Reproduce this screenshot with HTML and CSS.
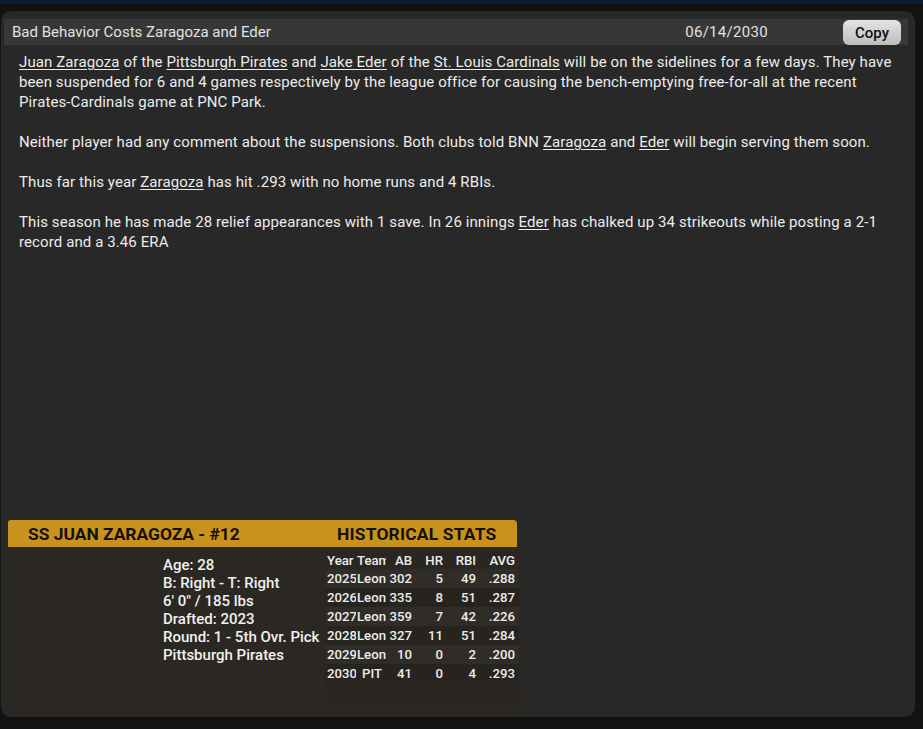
FILE: index.html
```html
<!DOCTYPE html>
<html>
<head>
<meta charset="utf-8">
<link rel="stylesheet" href="styles.css">
</head>
<body>
<div class="topbar"></div>
<div class="panel">
  <div class="header">
    <span class="title">Bad Behavior Costs Zaragoza and Eder</span>
    <span class="date">06/14/2030</span>
    <button class="copy">Copy</button>
  </div>
  <div class="article">
    <p><a>Juan Zaragoza</a> of the <a>Pittsburgh Pirates</a> and <a>Jake Eder</a> of the <a>St. Louis Cardinals</a> will be on the sidelines for a few days. They have been suspended for 6 and 4 games respectively by the league office for causing the bench-emptying free-for-all at the recent Pirates-Cardinals game at PNC Park.</p>
    <p>Neither player had any comment about the suspensions. Both clubs told BNN <a>Zaragoza</a> and <a>Eder</a> will begin serving them soon.</p>
    <p>Thus far this year <a>Zaragoza</a> has hit .293 with no home runs and 4 RBIs.</p>
    <p>This season he has made 28 relief appearances with 1 save. In 26 innings <a>Eder</a> has chalked up 34 strikeouts while posting a 2-1 record and a 3.46 ERA</p>
  </div>
  <div class="card">
    <div class="card-head">
      <span class="name">SS JUAN ZARAGOZA - #12</span>
      <span class="hist">HISTORICAL STATS</span>
    </div>
    <div class="card-body">
      <div class="info">
        <div>Age: 28</div>
        <div>B: Right - T: Right</div>
        <div>6' 0" / 185 lbs</div>
        <div>Drafted: 2023</div>
        <div>Round: 1 - 5th Ovr. Pick</div>
        <div>Pittsburgh Pirates</div>
      </div>
      <table class="stats">
        <colgroup>
          <col class="c-yr"><col class="c-tm"><col class="c-ab"><col class="c-hr"><col class="c-rbi"><col class="c-avg">
        </colgroup>
        <tr class="hdr"><td class="yr">Year</td><td class="tm">Team</td><td>AB</td><td>HR</td><td>RBI</td><td>AVG</td></tr>
        <tr class="alt"><td class="yr">2025</td><td class="tm">Leon</td><td>302</td><td>5</td><td>49</td><td>.288</td></tr>
        <tr><td class="yr">2026</td><td class="tm">Leon</td><td>335</td><td>8</td><td>51</td><td>.287</td></tr>
        <tr class="alt"><td class="yr">2027</td><td class="tm">Leon</td><td>359</td><td>7</td><td>42</td><td>.226</td></tr>
        <tr><td class="yr">2028</td><td class="tm">Leon</td><td>327</td><td>11</td><td>51</td><td>.284</td></tr>
        <tr class="alt"><td class="yr">2029</td><td class="tm">Leon</td><td>10</td><td>0</td><td>2</td><td>.200</td></tr>
        <tr><td class="yr">2030</td><td class="tm ctr">PIT</td><td>41</td><td>0</td><td>4</td><td>.293</td></tr>
        <tr class="empty"><td colspan="6"></td></tr>
      </table>
    </div>
  </div>
</div>
</body>
</html>
```

FILE: styles.css
```css
html, body {
  margin: 0;
  padding: 0;
  background: #121212;
  height: 729px;
  overflow: hidden;
  font-family: Roboto, "Noto Sans", sans-serif;
}

.topbar {
  height: 4px;
  background: #0f1a33;
  margin-bottom: 7px;
}

.panel {
  margin: 0 8px 0 1px;
  height: 706px;
  box-sizing: border-box;
  background: #282828;
  border-radius: 10px;
  padding: 8px 7px 0 3px;
  display: flex;
  flex-direction: column;
  overflow: hidden;
}

.header {
  height: 26px;
  background: #373737;
  display: flex;
  align-items: center;
  padding: 0 7px 0 8px;
  color: #e2e2e2;
  font-size: 15px;
}

.title {
  flex: 1;
}

.date {
  margin-right: 75px;
  font-size: 15px;
  letter-spacing: 0.3px;
}

.copy {
  width: 58px;
  height: 25px;
  border: none;
  border-radius: 6px;
  background: linear-gradient(#e4e4e4, #bdbdbd);
  font-family: Roboto, sans-serif;
  font-weight: 500;
  font-size: 15px;
  color: #111;
  padding: 0;
  margin-top: 1px;
}

.article {
  padding: 7px 10px 0 15px;
  color: #ececec;
  font-size: 15px;
  letter-spacing: 0.1px;
  line-height: 20px;
}

.article p {
  margin: 0 0 20px 0;
}

.article a {
  text-decoration: underline;
  text-underline-offset: 2px;
}

.card {
  margin-top: auto;
  margin-left: 4px;
  width: 511px;
}

.card-head {
  height: 27px;
  width: 509px;
  background: #c9921f;
  border-radius: 3px 4px 0 0;
  display: flex;
  align-items: center;
  font-weight: bold;
  font-size: 17.4px;
  color: #141008;
}

.name {
  width: 309px;
  padding-left: 20px;
}

.hist {
  letter-spacing: 0.2px;
}

.card-body {
  height: 170px;
  background: #2b2823;
  display: flex;
  padding-top: 5px;
  box-sizing: border-box;
}

.info {
  margin-left: 155px;
  width: 163px;
  color: #f0f0f0;
  font-size: 15px;
  font-weight: 500;
  line-height: 18px;
  padding-top: 4px;
  white-space: nowrap;
}

.stats {
  border-collapse: collapse;
  table-layout: fixed;
  width: 193px;
  font-size: 13.2px;
  line-height: 19px;
  color: #ececec;
  font-weight: 500;
  align-self: flex-start;
}

.c-yr { width: 30px; }
.c-tm { width: 30px; }
.c-ab { width: 30px; }
.c-hr { width: 31px; }
.c-rbi { width: 33px; }
.c-avg { width: 39px; }

.stats td {
  height: 19px;
  padding: 0 4px 0 0;
  text-align: right;
  white-space: nowrap;
  overflow: hidden;
  background: #27241f;
}

.stats td.yr {
  text-align: left;
  padding: 0 0 0 1px;
}

.stats td.tm {
  text-align: left;
  padding: 0 0 0 1px;
}

.stats td.tm.ctr {
  padding-left: 6px;
}

.stats tr.hdr td {
  height: 17px;
  line-height: 17px;
  background: #2a2722;
}

.stats tr.alt td {
  background: #302d28;
}

.stats tr.empty td {
  height: 19px;
  background: #2a2520;
}
```
